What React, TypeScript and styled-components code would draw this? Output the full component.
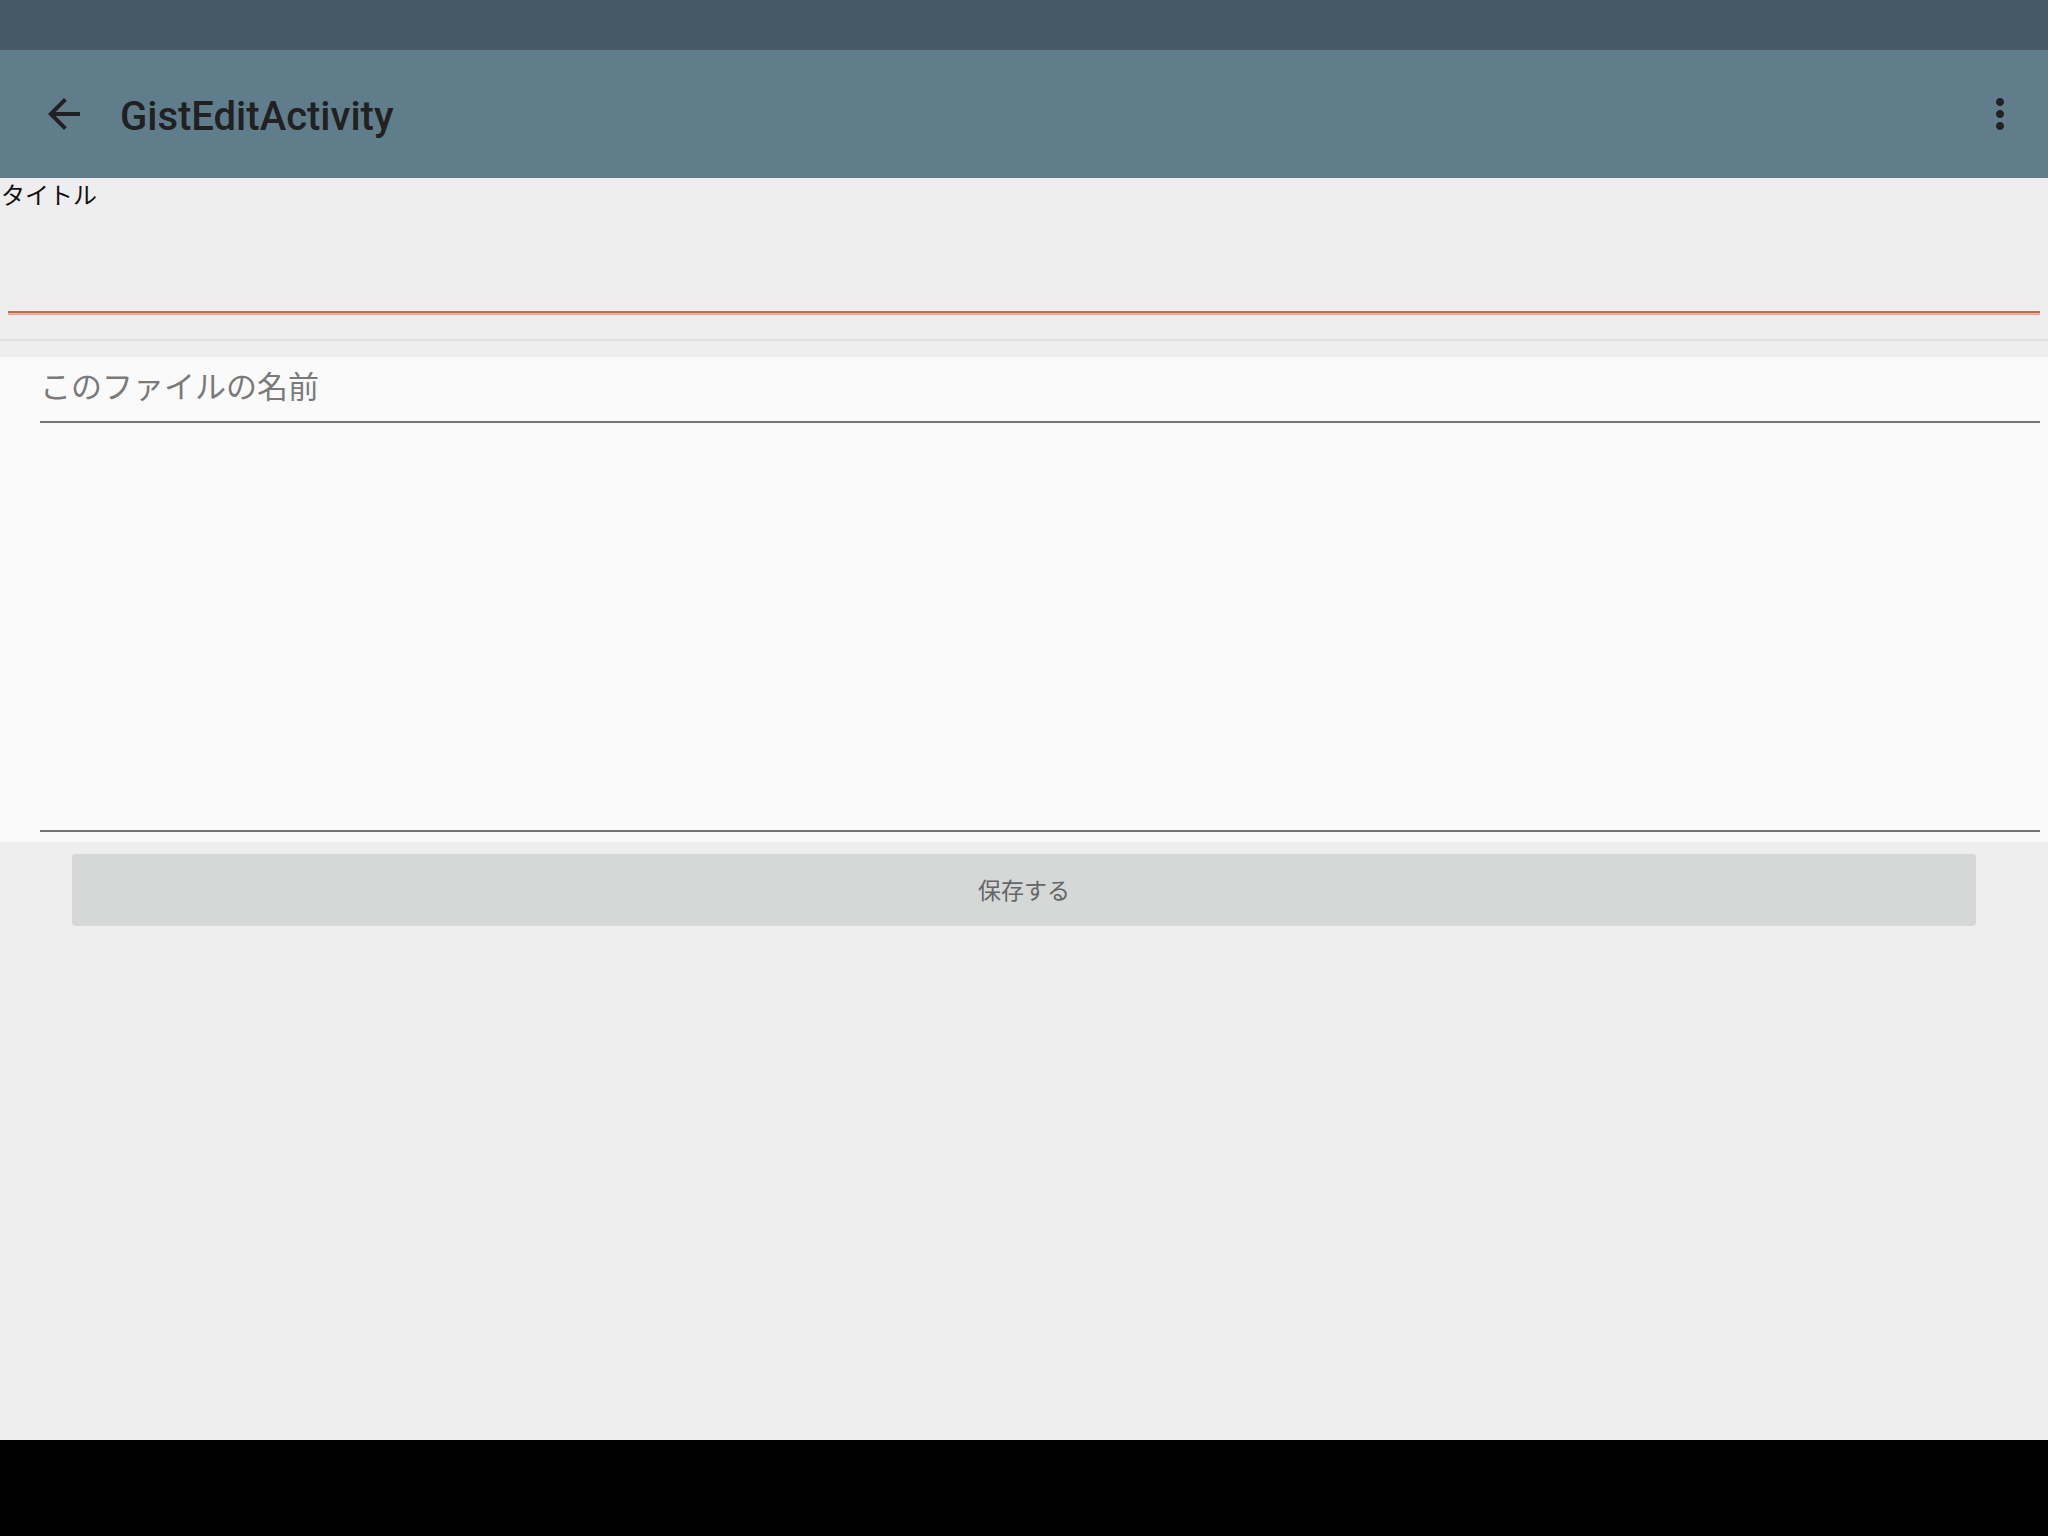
import React from "react";
import styled, { createGlobalStyle } from "styled-components";

const GlobalStyle = createGlobalStyle`
    html, body {
        margin: 0;
        padding: 0;
        background: #eeeeee;
    }
    * {
        box-sizing: border-box;
    }
`;

const Screen = styled.div`
    display: flex;
    flex-direction: column;
    width: 2048px;
    height: 1536px;
    background: #eeeeee;
    font-family: "Noto Sans CJK JP", "Noto Sans", sans-serif;
    overflow: hidden;
`;

const StatusBar = styled.div`
    height: 50px;
    flex-shrink: 0;
    background: #455a64;
`;

const AppBar = styled.div`
    display: flex;
    align-items: center;
    height: 128px;
    flex-shrink: 0;
    background: #607d8b;
    padding: 0 24px 0 40px;
`;

const IconButton = styled.div`
    display: flex;
    width: 48px;
    height: 48px;
    color: #212121;
`;

const Title = styled.div`
    flex: 1;
    margin-left: 32px;
    padding-top: 6px;
    font-family: Roboto, "Noto Sans", sans-serif;
    font-weight: 500;
    font-size: 40px;
    line-height: 48px;
    color: #212121;
`;

const Content = styled.div`
    flex: 1;
    display: flex;
    flex-direction: column;
`;

const FieldLabel = styled.div`
    padding: 2px 0 0 1px;
    font-size: 24px;
    line-height: 28px;
    color: #111;
`;

const TitleField = styled.div`
    height: 103px;
`;

const FocusLine = styled.div`
    margin: 0 8px;
    height: 4px;
    border-top: 2px solid #b8705e;
    background: #f4a894;
`;

const Divider = styled.div`
    margin-top: 24px;
    height: 2px;
    background: #e0e0e0;
`;

const FilePanel = styled.div`
    margin-top: 16px;
    height: 485px;
    background: #fafafa;
    padding: 0 8px 0 40px;
    display: flex;
    flex-direction: column;
`;

const NameInput = styled.div`
    height: 66px;
    border-bottom: 2px solid #757575;
    padding-top: 8px;
    font-size: 31px;
    line-height: 40px;
    color: #7a7a7a;
`;

const CodeArea = styled.div`
    height: 409px;
    border-bottom: 2px solid #757575;
`;

const SaveButton = styled.div`
    margin: 12px 72px 0;
    height: 72px;
    padding-bottom: 3px;
    border-radius: 4px;
    background: #d6d7d7;
    display: flex;
    align-items: center;
    justify-content: center;
    font-size: 23px;
    color: #666666;
`;

const NavBar = styled.div`
    height: 96px;
    flex-shrink: 0;
    background: #000;
`;

const BackIcon = () => (
    <svg width="48" height="48" viewBox="0 0 24 24" fill="currentColor">
        <path d="M20 11H7.83l5.59-5.59L12 4l-8 8 8 8 1.41-1.41L7.83 13H20v-2z" />
    </svg>
);

const MoreIcon = () => (
    <svg width="48" height="48" viewBox="0 0 24 24" fill="currentColor">
        <path d="M12 8c1.1 0 2-.9 2-2s-.9-2-2-2-2 .9-2 2 .9 2 2 2zm0 2c-1.1 0-2 .9-2 2s.9 2 2 2 2-.9 2-2-.9-2-2-2zm0 6c-1.1 0-2 .9-2 2s.9 2 2 2 2-.9 2-2-.9-2-2-2z" />
    </svg>
);

export default function App() {
    return (
        <>
            <GlobalStyle />
            <Screen>
                <StatusBar />
                <AppBar>
                    <IconButton><BackIcon /></IconButton>
                    <Title>GistEditActivity</Title>
                    <IconButton><MoreIcon /></IconButton>
                </AppBar>
                <Content>
                    <FieldLabel>タイトル</FieldLabel>
                    <TitleField />
                    <FocusLine />
                    <Divider />
                    <FilePanel>
                        <NameInput>このファイルの名前</NameInput>
                        <CodeArea />
                    </FilePanel>
                    <SaveButton>保存する</SaveButton>
                </Content>
                <NavBar />
            </Screen>
        </>
    );
}
